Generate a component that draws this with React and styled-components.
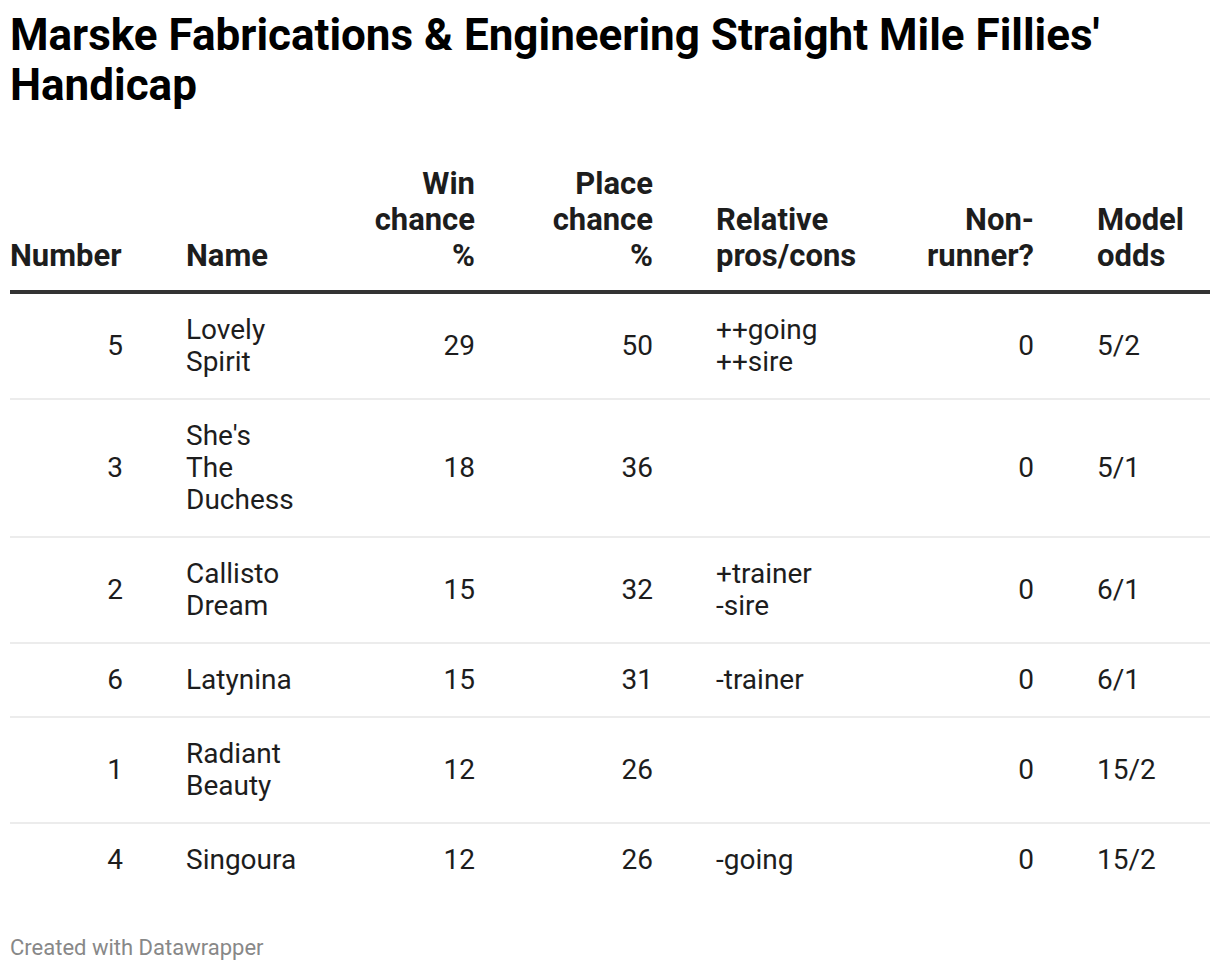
import React from "react";
import styled, { createGlobalStyle } from "styled-components";

const Global = createGlobalStyle`
  html, body { margin: 0; padding: 0; background: #fff; }
  body { font-family: Roboto, "Noto Sans", sans-serif; color: #1d1d1d; }
`;

const Page = styled.div`
  padding: 10px 10px 0 10px;
  width: 1200px;
`;

const Title = styled.h1`
  margin: 0;
  font-size: 44px;
  line-height: 50px;
  font-weight: 700;
  color: #000;
`;

const Table = styled.table`
  margin-top: 56px;
  width: 1200px;
  border-collapse: collapse;
  table-layout: fixed;
`;

const Th = styled.th`
  font-size: 31px;
  line-height: 36px;
  font-weight: 700;
  color: #1d1d1d;
  vertical-align: bottom;
  white-space: pre-line;
  text-align: ${(p) => (p.$right ? "right" : "left")};
  padding: 0 ${(p) => (p.$last ? 0 : p.$right ? 31 : 32)}px 16px
    ${(p) => (p.$first ? 0 : p.$right ? 4 : 32)}px;
  border-bottom: 4px solid #333;
`;

const Row = styled.tr`
  border-bottom: ${(p) => (p.$last ? "none" : "2px solid #ececec")};
`;

const Td = styled.td`
  font-size: 28px;
  line-height: 32px;
  color: #1d1d1d;
  vertical-align: middle;
  white-space: pre-line;
  text-align: ${(p) => (p.$right ? "right" : "left")};
  padding: 20px ${(p) => (p.$last ? 0 : p.$right ? 31 : 32)}px 20px
    ${(p) => (p.$first ? 0 : p.$right ? 4 : 32)}px;
`;

const Footer = styled.div`
  margin-top: 40px;
  font-size: 22px;
  line-height: 24px;
  color: #888;
`;

const cols = [
  { key: "num", label: "Number", right: true, width: 144 },
  { key: "name", label: "Name", width: 185 },
  { key: "win", label: "Win\nchance\n%", right: true, width: 167 },
  { key: "place", label: "Place\nchance\n%", right: true, width: 178 },
  { key: "rel", label: "Relative\npros/cons", width: 209 },
  { key: "nr", label: "Non-\nrunner?", right: true, width: 172 },
  { key: "odds", label: "Model\nodds", width: 145 },
];

const rows = [
  { num: 5, name: "Lovely\nSpirit", win: 29, place: 50, rel: "++going\n++sire", nr: 0, odds: "5/2" },
  { num: 3, name: "She's\nThe\nDuchess", win: 18, place: 36, rel: "", nr: 0, odds: "5/1" },
  { num: 2, name: "Callisto\nDream", win: 15, place: 32, rel: "+trainer\n-sire", nr: 0, odds: "6/1" },
  { num: 6, name: "Latynina", win: 15, place: 31, rel: "-trainer", nr: 0, odds: "6/1" },
  { num: 1, name: "Radiant\nBeauty", win: 12, place: 26, rel: "", nr: 0, odds: "15/2" },
  { num: 4, name: "Singoura", win: 12, place: 26, rel: "-going", nr: 0, odds: "15/2" },
];

export default function App() {
  return (
    <Page>
      <Global />
      <Title>Marske Fabrications &amp; Engineering Straight Mile Fillies' Handicap</Title>
      <Table>
        <colgroup>
          {cols.map((c) => (
            <col key={c.key} style={{ width: c.width }} />
          ))}
        </colgroup>
        <thead>
          <tr>
            {cols.map((c, i) => (
              <Th
                key={c.key}
                $right={c.right && i !== 0}
                $first={i === 0}
                $last={i === cols.length - 1}
              >
                {c.label}
              </Th>
            ))}
          </tr>
        </thead>
        <tbody>
          {rows.map((r, ri) => (
            <Row key={ri} $last={ri === rows.length - 1}>
              {cols.map((c, i) => (
                <Td key={c.key} $right={c.right} $first={i === 0} $last={i === cols.length - 1}>
                  {r[c.key]}
                </Td>
              ))}
            </Row>
          ))}
        </tbody>
      </Table>
      <Footer>Created with Datawrapper</Footer>
    </Page>
  );
}
